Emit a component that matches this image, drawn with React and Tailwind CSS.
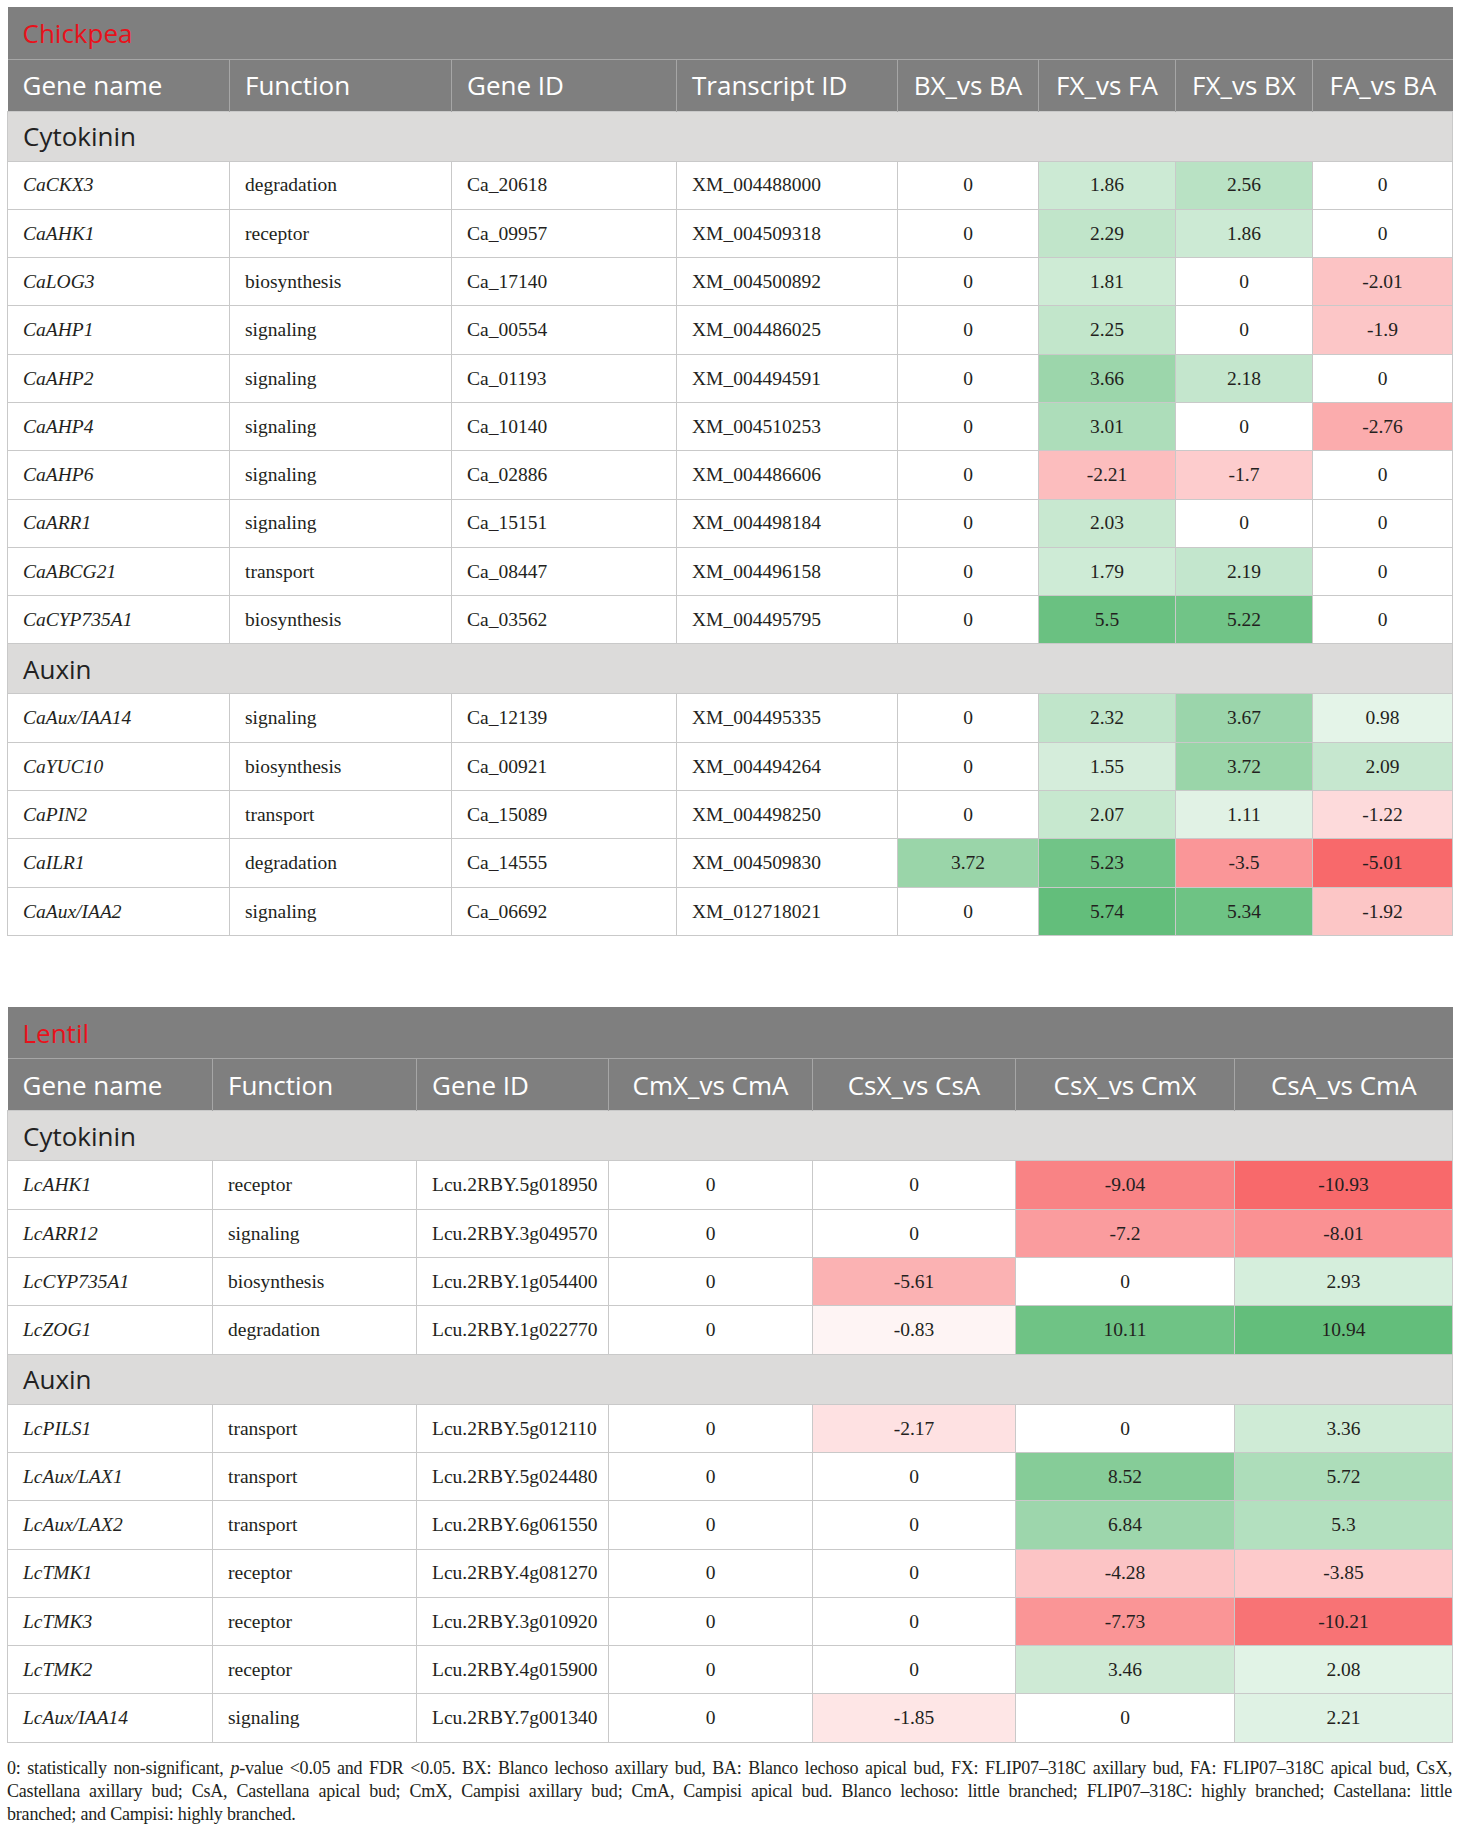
import React from 'react';

// Excel-like 3 colour scale: red (min) -> white (0) -> green (max)
const GREEN = [99, 190, 123];
const RED = [248, 105, 107];

function heat(v, max, min) {
  if (v === 0) return '#ffffff';
  const t = v > 0 ? v / max : v / min;
  const c = v > 0 ? GREEN : RED;
  const mix = c.map((ch) => Math.round(255 - t * (255 - ch)));
  return `rgb(${mix.join(',')})`;
}

const chickpea = {
  title: 'Chickpea',
  cols: ['Gene name', 'Function', 'Gene ID', 'Transcript ID', 'BX_vs BA', 'FX_vs FA', 'FX_vs BX', 'FA_vs BA'],
  widths: ['w-[222px]', 'w-[222px]', 'w-[225px]', 'w-[221px]', 'w-[141px]', 'w-[137px]', 'w-[137px]', 'w-[140px]'],
  textCols: 4,
  groups: [
    {
      name: 'Cytokinin',
      rows: [
        ['CaCKX3', 'degradation', 'Ca_20618', 'XM_004488000', 0, 1.86, 2.56, 0],
        ['CaAHK1', 'receptor', 'Ca_09957', 'XM_004509318', 0, 2.29, 1.86, 0],
        ['CaLOG3', 'biosynthesis', 'Ca_17140', 'XM_004500892', 0, 1.81, 0, -2.01],
        ['CaAHP1', 'signaling', 'Ca_00554', 'XM_004486025', 0, 2.25, 0, -1.9],
        ['CaAHP2', 'signaling', 'Ca_01193', 'XM_004494591', 0, 3.66, 2.18, 0],
        ['CaAHP4', 'signaling', 'Ca_10140', 'XM_004510253', 0, 3.01, 0, -2.76],
        ['CaAHP6', 'signaling', 'Ca_02886', 'XM_004486606', 0, -2.21, -1.7, 0],
        ['CaARR1', 'signaling', 'Ca_15151', 'XM_004498184', 0, 2.03, 0, 0],
        ['CaABCG21', 'transport', 'Ca_08447', 'XM_004496158', 0, 1.79, 2.19, 0],
        ['CaCYP735A1', 'biosynthesis', 'Ca_03562', 'XM_004495795', 0, 5.5, 5.22, 0],
      ],
    },
    {
      name: 'Auxin',
      rows: [
        ['CaAux/IAA14', 'signaling', 'Ca_12139', 'XM_004495335', 0, 2.32, 3.67, 0.98],
        ['CaYUC10', 'biosynthesis', 'Ca_00921', 'XM_004494264', 0, 1.55, 3.72, 2.09],
        ['CaPIN2', 'transport', 'Ca_15089', 'XM_004498250', 0, 2.07, 1.11, -1.22],
        ['CaILR1', 'degradation', 'Ca_14555', 'XM_004509830', 3.72, 5.23, -3.5, -5.01],
        ['CaAux/IAA2', 'signaling', 'Ca_06692', 'XM_012718021', 0, 5.74, 5.34, -1.92],
      ],
    },
  ],
};

const lentil = {
  title: 'Lentil',
  cols: ['Gene name', 'Function', 'Gene ID', 'CmX_vs CmA', 'CsX_vs CsA', 'CsX_vs CmX', 'CsA_vs CmA'],
  widths: ['w-[205px]', 'w-[204px]', 'w-[192px]', 'w-[204px]', 'w-[203px]', 'w-[219px]', 'w-[218px]'],
  textCols: 3,
  groups: [
    {
      name: 'Cytokinin',
      rows: [
        ['LcAHK1', 'receptor', 'Lcu.2RBY.5g018950', 0, 0, -9.04, -10.93],
        ['LcARR12', 'signaling', 'Lcu.2RBY.3g049570', 0, 0, -7.2, -8.01],
        ['LcCYP735A1', 'biosynthesis', 'Lcu.2RBY.1g054400', 0, -5.61, 0, 2.93],
        ['LcZOG1', 'degradation', 'Lcu.2RBY.1g022770', 0, -0.83, 10.11, 10.94],
      ],
    },
    {
      name: 'Auxin',
      rows: [
        ['LcPILS1', 'transport', 'Lcu.2RBY.5g012110', 0, -2.17, 0, 3.36],
        ['LcAux/LAX1', 'transport', 'Lcu.2RBY.5g024480', 0, 0, 8.52, 5.72],
        ['LcAux/LAX2', 'transport', 'Lcu.2RBY.6g061550', 0, 0, 6.84, 5.3],
        ['LcTMK1', 'receptor', 'Lcu.2RBY.4g081270', 0, 0, -4.28, -3.85],
        ['LcTMK3', 'receptor', 'Lcu.2RBY.3g010920', 0, 0, -7.73, -10.21],
        ['LcTMK2', 'receptor', 'Lcu.2RBY.4g015900', 0, 0, 3.46, 2.08],
        ['LcAux/IAA14', 'signaling', 'Lcu.2RBY.7g001340', 0, -1.85, 0, 2.21],
      ],
    },
  ],
};

function HeatTable({ data }) {
  const values = data.groups.flatMap((g) => g.rows.flatMap((r) => r.slice(data.textCols)));
  const max = Math.max(...values);
  const min = Math.min(...values);
  const n = data.cols.length;

  return (
    <table className="w-full table-fixed border-collapse">
      <colgroup>
        {data.widths.map((w, i) => (
          <col key={i} className={w} />
        ))}
      </colgroup>
      <thead>
        <tr className="h-[52px]">
          <th
            colSpan={n}
            className="bg-[#7f7f7f] pl-[15px] text-left align-middle font-['Open_Sans',sans-serif] text-[26px] font-normal leading-none text-[#e8111b]"
          >
            {data.title}
          </th>
        </tr>
        <tr className="h-[52px]">
          {data.cols.map((c, i) => (
            <th
              key={c}
              className={
                'border-t border-l border-[#a6a6a6] bg-[#7f7f7f] font-[\'Open_Sans\',sans-serif] text-[26px] font-normal leading-none whitespace-nowrap text-white first:border-l-0 ' +
                (i < data.textCols ? 'pl-[15px] text-left' : 'text-center')
              }
            >
              {c}
            </th>
          ))}
        </tr>
      </thead>
      <tbody>
        {data.groups.map((g) => (
          <React.Fragment key={g.name}>
            <tr className="h-[50px]">
              <td
                colSpan={n}
                className="border border-[#c9c9c9] bg-[#dcdbda] pl-[15px] font-['Open_Sans',sans-serif] text-[26px] leading-none text-[#222]"
              >
                {g.name}
              </td>
            </tr>
            {g.rows.map((r) => (
              <tr key={r[0]} className="h-[48.3px]">
                {r.map((cell, i) =>
                  i < data.textCols ? (
                    <td
                      key={i}
                      className={
                        'border border-[#c9c9c9] pl-[15px] text-left font-[\'Liberation_Serif\',serif] text-[19.5px] leading-none text-[#231f20] ' +
                        (i === 0 ? 'italic' : '')
                      }
                    >
                      {cell}
                    </td>
                  ) : (
                    <td
                      key={i}
                      className="border border-[#c9c9c9] text-center font-['Liberation_Serif',serif] text-[19.5px] leading-none text-[#231f20]"
                      style={{ backgroundColor: heat(cell, max, min) }}
                    >
                      {cell}
                    </td>
                  )
                )}
              </tr>
            ))}
          </React.Fragment>
        ))}
      </tbody>
    </table>
  );
}

export default function App() {
  return (
    <div className="min-h-screen bg-white pt-[7px] pl-[7px] pr-[8px]">
      <HeatTable data={chickpea} />
      <div className="h-[71px]" />
      <HeatTable data={lentil} />
      <div className="mt-[14px] font-['Liberation_Serif',serif] text-[18px] leading-[23px] tracking-[-0.2px] text-[#231f20]">
        <p className="whitespace-nowrap text-justify [text-align-last:justify]">
          0: statistically non-significant, <i>p</i>-value &lt;0.05 and FDR &lt;0.05. BX: Blanco lechoso axillary bud, BA: Blanco
          lechoso apical bud, FX: FLIP07–318C axillary bud, FA: FLIP07–318C apical bud, CsX,
        </p>
        <p className="whitespace-nowrap text-justify [text-align-last:justify]">
          Castellana axillary bud; CsA, Castellana apical bud; CmX, Campisi axillary bud; CmA, Campisi apical bud. Blanco
          lechoso: little branched; FLIP07–318C: highly branched; Castellana: little
        </p>
        <p>branched; and Campisi: highly branched.</p>
      </div>
    </div>
  );
}
